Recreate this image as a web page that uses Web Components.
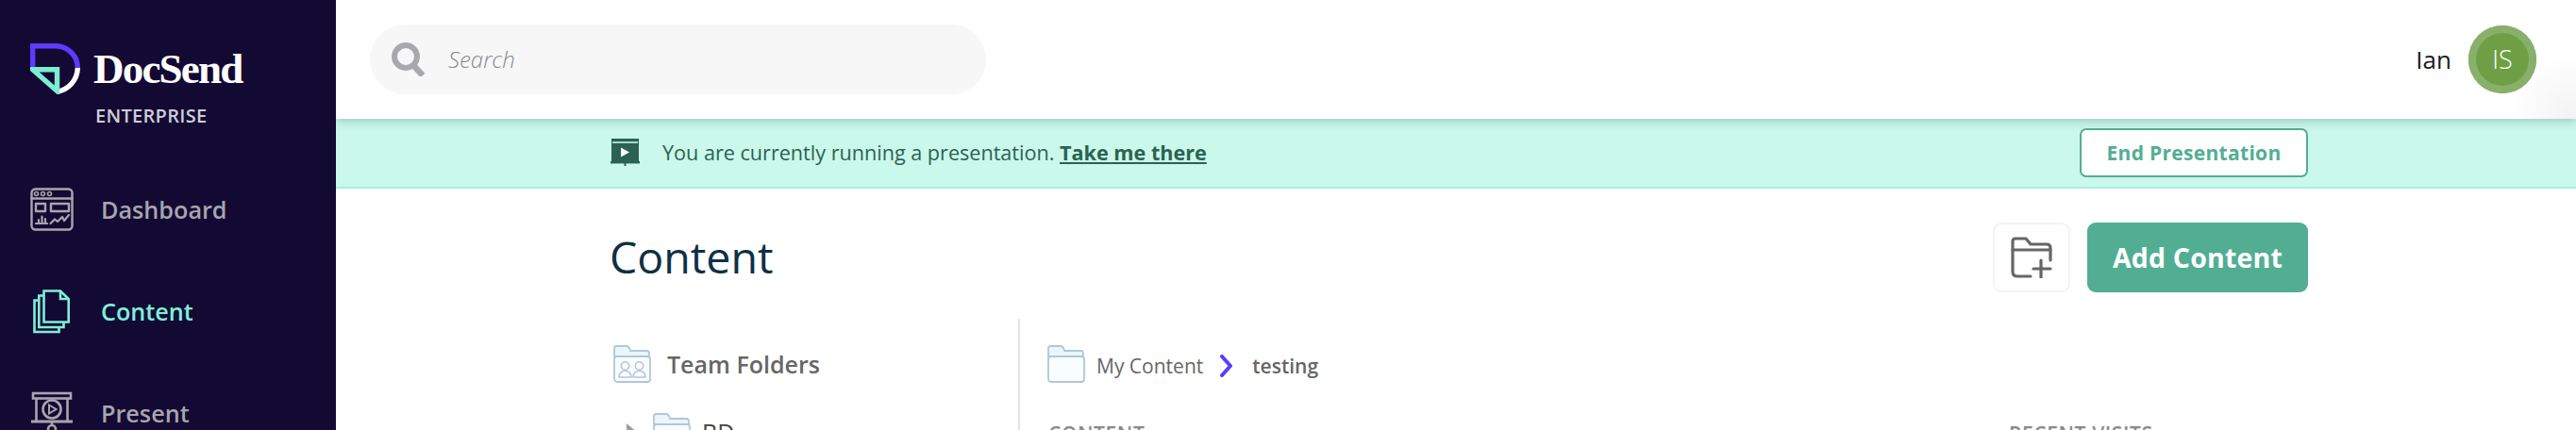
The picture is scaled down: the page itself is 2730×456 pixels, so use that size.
<!DOCTYPE html>
<html lang="en">
<head>
<meta charset="utf-8">
<title>DocSend</title>
<style>
html,body{margin:0;height:456px;overflow:hidden;background:#fff;font-family:"Open Sans",sans-serif}
</style>
</head>
<body>
<ds-app>
  <ds-sidebar slot="side">
    <ds-nav-item icon="dashboard">Dashboard</ds-nav-item>
    <ds-nav-item icon="content" active>Content</ds-nav-item>
    <ds-nav-item icon="present">Present</ds-nav-item>
  </ds-sidebar>
  <ds-topbar slot="main" user="Ian" initials="IS"></ds-topbar>
  <ds-banner slot="main">You are currently running a presentation. <a>Take me there</a></ds-banner>
  <ds-page slot="main">
    <ds-tree slot="tree"></ds-tree>
    <ds-browser slot="browser"></ds-browser>
  </ds-page>
</ds-app>
<script>
function def(name, css, html, init){
  customElements.define(name, class extends HTMLElement{
    connectedCallback(){
      if(this.shadowRoot) return;
      const r=this.attachShadow({mode:'open'});
      r.innerHTML='<style>'+css+'</style>'+(typeof html==='function'?html(this):html);
      if(init) init(this,r);
    }
  });
}
const ICONS={
 dashboard:`<svg width="46" height="46" viewBox="0 0 46 46" fill="none" stroke="currentColor" stroke-width="2.4" stroke-linejoin="round" stroke-linecap="round"><rect x="1.5" y="1.5" width="43" height="43" rx="4"/><path d="M1.5 11.5H44.5"/><circle cx="6.5" cy="6.5" r="2" stroke-width="1.6"/><circle cx="13.5" cy="6.5" r="2" stroke-width="1.6"/><circle cx="20.5" cy="6.5" r="2" stroke-width="1.6"/><rect x="6" y="17" width="10" height="8"/><rect x="22" y="17" width="19" height="8"/><path d="M6 38H18M9 37V34M12.5 37V30.5M16 37V33" stroke-width="2.2"/><path d="M21.5 38L26 33.5L29 36L34 31L36 35L41 29" stroke-width="2.2"/></svg>`,
 content:`<svg width="40" height="47" viewBox="0 0 40 47" fill="none" stroke="currentColor" stroke-width="2.6"><path d="M11.5 1.5H29L37.7 10V34.5H11.5Z"/><path d="M29 1.5V10H37.7"/><path d="M11.5 6.5H6.3V40H32.5V34.5"/><path d="M6.3 11.5H1.5V45H27.5V40"/></svg>`,
 present:`<svg width="46" height="46" viewBox="0 0 46 46" fill="none" stroke="currentColor" stroke-width="2.6"><rect x="3" y="2" width="40" height="5.5"/><path d="M6.5 7.5V31.5M39.5 7.5V31.5"/><path d="M1 32H45" stroke-width="3"/><circle cx="23" cy="19" r="9.5"/><path d="M20 14.5L27.5 19L20 23.5Z" stroke-width="2"/><path d="M23 32V36"/><circle cx="23" cy="40" r="4"/></svg>`
};
function folder(extra,w,h){
  return `<svg width="${w||40}" height="${h||40}" viewBox="0 0 40 40" fill="none" stroke="#b1c7d7" stroke-width="1.8" stroke-linejoin="round"><path d="M1 12V3.5Q1 1 3.5 1H14Q16 1 17 3L18 6H35.5Q38 6 38 9V12Z" fill="#eaf5fc"/><rect x="1" y="12" width="38" height="27" rx="3" fill="#fafdff"/>${extra||''}</svg>`;
}
def('ds-app',`:host{display:grid;grid-template-columns:356px 1fr;width:2730px;height:456px;overflow:hidden}
 .m{display:flex;flex-direction:column;min-width:0;height:456px;overflow:hidden}`,
 `<slot name="side"></slot><div class="m"><slot name="main"></slot></div>`);

def('ds-sidebar',`:host{display:flex;flex-direction:column;height:456px;background:#130a33;overflow:hidden;box-sizing:border-box;padding:46px 0 0 32px}
 .logo{flex:none;display:grid;grid-template-columns:auto 1fr;column-gap:14px;height:122px;align-content:start}
 .word{font:700 45px/50px "Liberation Serif",serif;color:#fff;letter-spacing:-1.8px;margin-top:2px}
 .ent{grid-column:2;font:600 20px/24px "Open Sans",sans-serif;color:#cfcdd8;letter-spacing:.3px;margin:11px 0 0 2px}
 nav{flex:none;display:flex;flex-direction:column}`,
 `<div class="logo"><svg width="53" height="54" viewBox="0 0 53 54" fill="none" stroke-width="5.4">
   <path d="M2.7 26V2.7H27A23.3 23.3 0 0 1 50.3 26" stroke="#5c3bff"/>
   <path d="M50.3 26A26 26 0 0 1 28 51.3" stroke="#fff"/>
   <path d="M2.5 27.7H28.5V50.5Z" stroke="#7eecd3" stroke-linejoin="miter"/>
  </svg><div class="word">DocSend</div><div class="ent">ENTERPRISE</div></div><nav><slot></slot></nav>`);

def('ds-nav-item',`:host{display:flex;align-items:center;height:108px;color:#a7a5ae;font:600 25.2px/36px "Open Sans",sans-serif}
 :host([active]){color:#7feeda}
 .i{width:46px;margin-right:29px;display:flex;align-items:center;justify-content:center;flex:none}`,
 el=>`<span class="i" part="i">${ICONS[el.getAttribute('icon')]}</span><slot></slot>`);

def('ds-topbar',`:host{display:flex;align-items:center;flex:none;height:126px;box-sizing:border-box;padding:0 42px 0 36px;position:relative;z-index:1;
   background:radial-gradient(circle at 100% 100%,#f2f2f2 0,#fff 70px);box-shadow:0 2px 10px rgba(60,110,95,.35)}
 .s{display:flex;align-items:center;width:653px;height:74px;border-radius:37px;background:#f7f7f7;box-sizing:border-box;padding-left:23px}
 .s span{font:italic 300 24px/32px "Open Sans",sans-serif;color:#8a8a8e;margin-left:23px}
 .u{margin-left:auto;display:flex;align-items:center;gap:18px;font:400 26px/36px "Open Sans",sans-serif;color:#1c1c1c}
 .a{width:72px;height:72px;border-radius:50%;background:#6f9f45;box-shadow:inset 0 0 0 8px #88b06b;display:flex;align-items:center;justify-content:center;color:#fff;font:300 27px/36px "Open Sans",sans-serif}`,
 el=>`<div class="s"><svg width="37" height="36" viewBox="0 0 37 36" fill="none" stroke="#a9a9ad"><circle cx="15" cy="15" r="12" stroke-width="6"/><path d="M22 23L33 35" stroke-width="6.5"/></svg><span>Search</span></div>
 <div class="u"><span>${el.getAttribute('user')}</span><span class="a">${el.getAttribute('initials')}</span></div>`);

def('ds-banner',`:host{display:flex;align-items:center;flex:none;height:74px;box-sizing:border-box;background:#caf8ea;border-bottom:2px solid #a8f1dc;padding:0 284px 2px 291px;color:#2b6252;font:400 21.6px/30px "Open Sans",sans-serif}
 svg{margin-right:24px;flex:none}
 ::slotted(a){font-weight:700;text-decoration:underline;color:#2b6252}
 button{margin-left:auto;width:242px;height:52px;margin-top:2px;box-sizing:border-box;border:2px solid #52ae93;border-radius:7px;background:#fff;color:#52ae93;font:700 21px/28px "Open Sans",sans-serif;letter-spacing:.3px;padding:0}
 .t{white-space:pre;padding-top:2px}`,
 `<svg width="31" height="29" viewBox="0 0 31 29"><rect x="1" y="0" width="29" height="26" fill="#2b6252"/><rect x="2" y="3" width="27" height="2" fill="#a9d6c6"/><rect x="0" y="24" width="31" height="2.4" fill="#2b6252"/><rect x="14.5" y="25" width="2" height="4" fill="#2b6252"/><path d="M11 9.5L20 14.5L11 19.5Z" fill="#fff"/></svg><span class="t"><slot></slot></span><button>End Presentation</button>`);

def('ds-page',`:host{display:block;flex:1;min-height:0;box-sizing:border-box;padding:36px 284px 0 290px;background:#fff}
 header{display:flex;align-items:center;height:74px}
 h1{margin:0 auto 2px 0;font:400 46.5px/66px "Open Sans",sans-serif;color:#0f2f47}
 .f{width:82px;height:74px;box-sizing:border-box;border:2px solid #f3f3f3;border-radius:9px;background:#fff;display:flex;align-items:center;justify-content:center;margin-right:18px}
 .add{width:234px;height:74px;border-radius:9px;background:#52ae93;color:#fff;font:700 28.5px/38px "Open Sans",sans-serif;display:flex;align-items:center;justify-content:center;letter-spacing:.2px}
 .c{display:grid;grid-template-columns:435px 1fr;margin-top:28px}`,
 `<header><h1>Content</h1><div class="f"><svg width="44" height="44" viewBox="0 0 44 44" fill="none" stroke="#666" stroke-width="3.2" stroke-linecap="round" stroke-linejoin="round"><path d="M21 42H7Q2 42 2 37V5Q2 2 5 2H16L21 8H38Q42 8 42 12V25"/><path d="M2 14H42"/><path d="M24 34H42M32 25V43"/></svg></div><div class="add">Add Content</div></header>
 <div class="c"><slot name="tree"></slot><slot name="browser"></slot></div>`);

def('ds-tree',`:host{display:block;box-sizing:border-box;border-right:2px solid #e2e2e2;height:130px;padding:28px 0 0 4px;font-family:"Open Sans",sans-serif}
 .r{display:flex;align-items:center;height:40px}
 .team{font:600 25px/36px "Open Sans",sans-serif;color:#666;margin-left:17px}
 .bd{margin-top:32px;margin-left:14px}
 .arrow{width:0;height:0;border-style:solid;border-width:10px 0 10px 12px;border-color:transparent transparent transparent #9d9d9d;margin:2px 16px 0 0}
 .name{font:400 25px/36px "Open Sans",sans-serif;color:#444;margin-left:12px}`,
 `<div class="r">${folder(`<g stroke-width="1.6"><circle cx="12.5" cy="22" r="4.2"/><circle cx="27.5" cy="22" r="4.2"/><path d="M6 34Q6 28 12.5 27Q19 28 19 34ZM21 34Q21 28 27.5 27Q34 28 34 34Z"/></g>`)}<span class="team">Team Folders</span></div>
 <div class="r bd"><span class="arrow"></span>${folder()}<span class="name">BD</span></div>`);

def('ds-browser',`:host{display:block;box-sizing:border-box;padding:28px 0 0 29px;font-family:"Open Sans",sans-serif;height:130px;overflow:hidden}
 .b{display:flex;align-items:center;height:40px;font:400 21px/32px "Open Sans",sans-serif;color:#666}
 .b svg+span{margin-left:12px}
 .b span{padding-top:3px}
 .chev{margin:3px 9px 0 18px}
 .cur{font-weight:600}
 .h{display:grid;grid-template-columns:1018px 1fr;margin:42px 0 0 1px;font:600 21px/24px "Open Sans",sans-serif;color:#8a8a8a;letter-spacing:.6px}`,
 `<div class="b">${folder()}<span>My Content</span><svg class="chev" width="13" height="24" viewBox="0 0 13 24" fill="none" stroke="#5c3bff" stroke-width="4" stroke-linecap="round" stroke-linejoin="round"><path d="M2 2L11 12L2 22"/></svg><span class="cur">testing</span></div>
 <div class="h"><span>CONTENT</span><span>RECENT VISITS</span></div>`);
</script>
</body>
</html>
